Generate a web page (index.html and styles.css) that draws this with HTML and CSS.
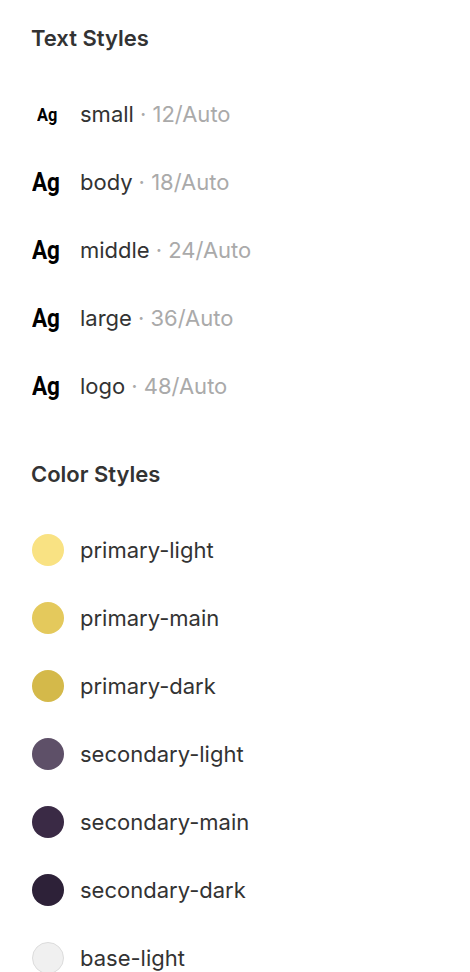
FILE: index.html
```html
<!DOCTYPE html>
<html>
<head>
<meta charset="utf-8">
<link rel="stylesheet" href="styles.css">
</head>
<body>
<div class="panel">
  <h2 class="title">Text Styles</h2>
  <ul class="list">
    <li class="row"><span class="ag-box"><span class="ag ag-small">Ag</span></span><span class="name">small</span><span class="meta">· 12/Auto</span></li>
    <li class="row"><span class="ag-box"><span class="ag">Ag</span></span><span class="name">body</span><span class="meta">· 18/Auto</span></li>
    <li class="row"><span class="ag-box"><span class="ag">Ag</span></span><span class="name">middle</span><span class="meta">· 24/Auto</span></li>
    <li class="row"><span class="ag-box"><span class="ag">Ag</span></span><span class="name">large</span><span class="meta">· 36/Auto</span></li>
    <li class="row"><span class="ag-box"><span class="ag">Ag</span></span><span class="name">logo</span><span class="meta">· 48/Auto</span></li>
  </ul>
  <h2 class="title title-color">Color Styles</h2>
  <ul class="list list-color">
    <li class="row"><span class="dot c-pl"></span><span class="name">primary-light</span></li>
    <li class="row"><span class="dot c-pm"></span><span class="name">primary-main</span></li>
    <li class="row"><span class="dot c-pd"></span><span class="name">primary-dark</span></li>
    <li class="row"><span class="dot c-sl"></span><span class="name">secondary-light</span></li>
    <li class="row"><span class="dot c-sm"></span><span class="name">secondary-main</span></li>
    <li class="row"><span class="dot c-sd"></span><span class="name">secondary-dark</span></li>
    <li class="row"><span class="dot c-bl"></span><span class="name">base-light</span></li>
  </ul>
</div>
</body>
</html>
```
FILE: styles.css
```css
html, body {
  margin: 0;
  padding: 0;
  background: #ffffff;
}
body {
  font-family: Inter, "Noto Sans", sans-serif;
  color: #333333;
}
.panel {
  padding: 24px 0 0 31px;
}
.title {
  margin: 0;
  font-size: 22px;
  font-weight: 600;
  line-height: 28px;
  color: #333333;
}
.title-color {
  margin-top: 40px;
}
.list {
  list-style: none;
  margin: 28px 0 0 0;
  padding: 0;
}
.list-color {
  margin-top: 28px;
}
.row {
  display: flex;
  align-items: center;
  height: 68px;
}
.ag-box {
  width: 49px;
  flex: none;
  padding-left: 1px;
  box-sizing: border-box;
}
.ag {
  display: inline-block;
  font-family: Roboto, "Liberation Sans", sans-serif;
  font-weight: 700;
  font-size: 25px;
  color: #000000;
  transform: scaleX(0.9);
  transform-origin: left center;
}
.ag-small {
  font-size: 19px;
  margin-left: 5px;
  transform: scaleX(0.86);
}
.name {
  font-size: 22px;
  color: #333333;
}
.meta {
  font-size: 22px;
  color: #aaaaaa;
  margin-left: 6px;
}
.dot {
  width: 32px;
  height: 32px;
  border-radius: 50%;
  margin-left: 1px;
  margin-right: 16px;
  flex: none;
  box-sizing: border-box;
}
.c-pl { background: #f9e283; }
.c-pm { background: #e4c95c; }
.c-pd { background: #d4b94a; }
.c-sl { background: #5e5068; }
.c-sm { background: #3a2a45; }
.c-sd { background: #2d2138; }
.c-bl { background: #f0f0f0; border: 1px solid #dcdcdc; }
```
